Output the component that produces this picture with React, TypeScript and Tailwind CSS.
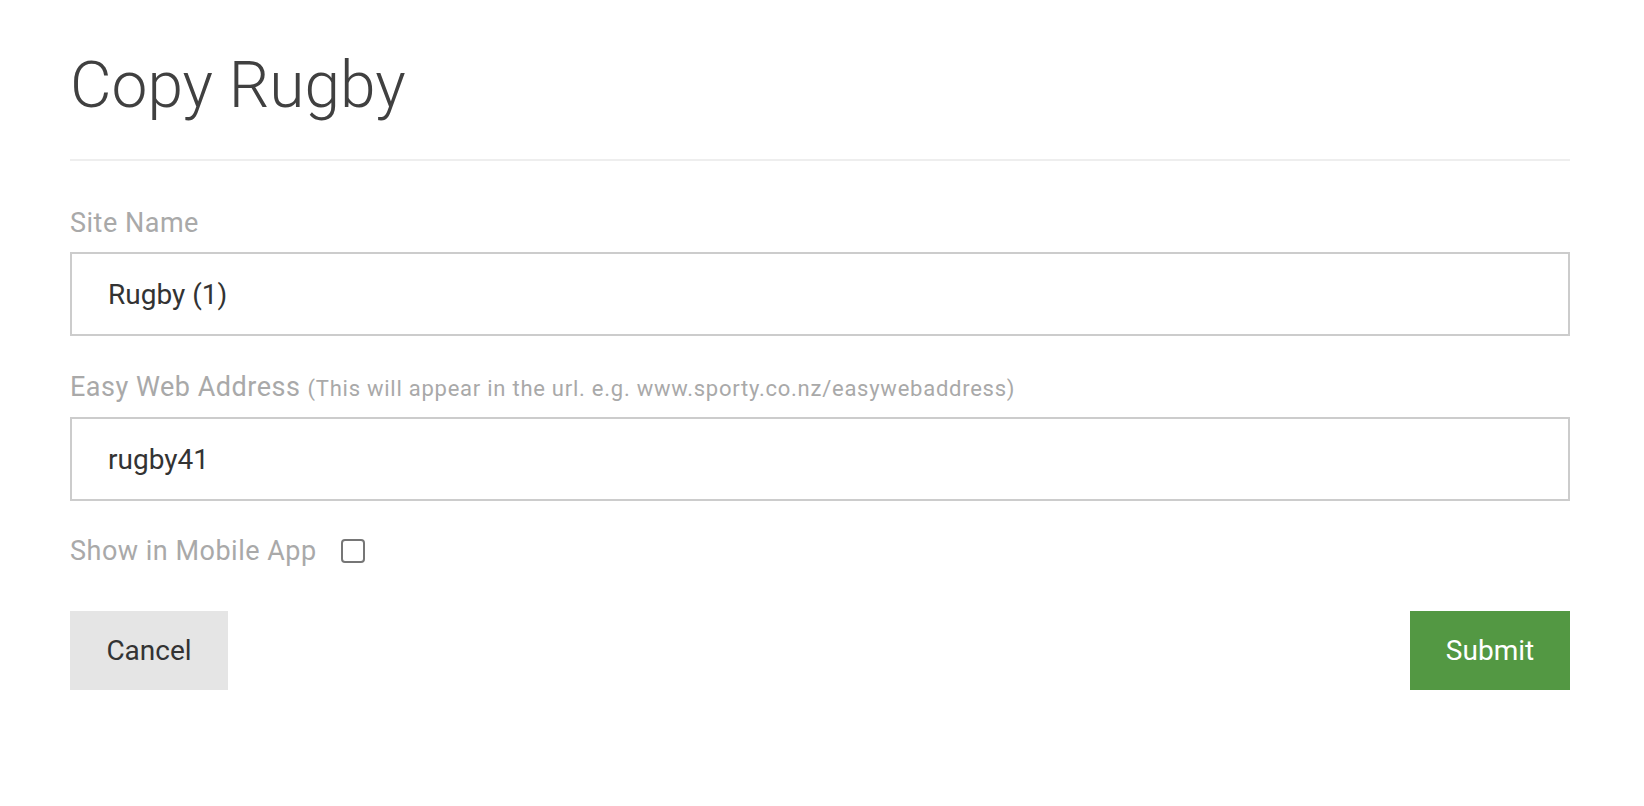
import { useState } from 'react';

export default function App() {
  const [siteName, setSiteName] = useState('Rugby (1)');
  const [address, setAddress] = useState('rugby41');
  const [showInApp, setShowInApp] = useState(false);

  return (
    <div className="min-h-screen bg-white font-['Roboto',sans-serif]">
      <div className="ml-[70px] w-[1500px] pt-[54px]">
        <h1 className="text-[64px] leading-[64px] font-light text-[#404040]">Copy Rugby</h1>
        <div className="mt-[41px] h-[2px] bg-[#eeeeee]" />

        <form className="flex flex-col" onSubmit={(e) => e.preventDefault()}>
          <label className="mt-[50px] text-[27px] leading-[24px] tracking-[0.5px] text-[#a9a9a9]">Site Name</label>
          <input
            value={siteName}
            onChange={(e) => setSiteName(e.target.value)}
            className="mt-[17px] h-[84px] w-full border-2 border-[#cccccc] bg-white pl-[36px] text-[28px] text-[#333333] outline-none"
          />

          <label className="mt-[39px] text-[27px] leading-[24px] tracking-[0.5px] text-[#a9a9a9]">
            Easy Web Address{' '}
            <span className="text-[22px] tracking-[0.75px]">(This will appear in the url. e.g. www.sporty.co.nz/easywebaddress)</span>
          </label>
          <input
            value={address}
            onChange={(e) => setAddress(e.target.value)}
            className="mt-[16px] h-[84px] w-full border-2 border-[#cccccc] bg-white pl-[36px] text-[28px] text-[#333333] outline-none"
          />

          <label className="mt-[38px] flex items-center gap-[24px] text-[27px] leading-[24px] tracking-[0.5px] text-[#a9a9a9]">
            Show in Mobile App
            <input
              type="checkbox"
              checked={showInApp}
              onChange={(e) => setShowInApp(e.target.checked)}
              className="h-[24px] w-[24px] appearance-none rounded-[4px] border-2 border-[#767676] bg-white checked:bg-[#539843]"
            />
          </label>

          <div className="mt-[48px] flex items-center justify-between">
            <button type="button" className="h-[79px] w-[158px] bg-[#e5e5e5] text-[28px] text-[#333333]">
              Cancel
            </button>
            <button type="submit" className="h-[79px] w-[160px] bg-[#539843] text-[28px] text-white">
              Submit
            </button>
          </div>
        </form>
      </div>
    </div>
  );
}
